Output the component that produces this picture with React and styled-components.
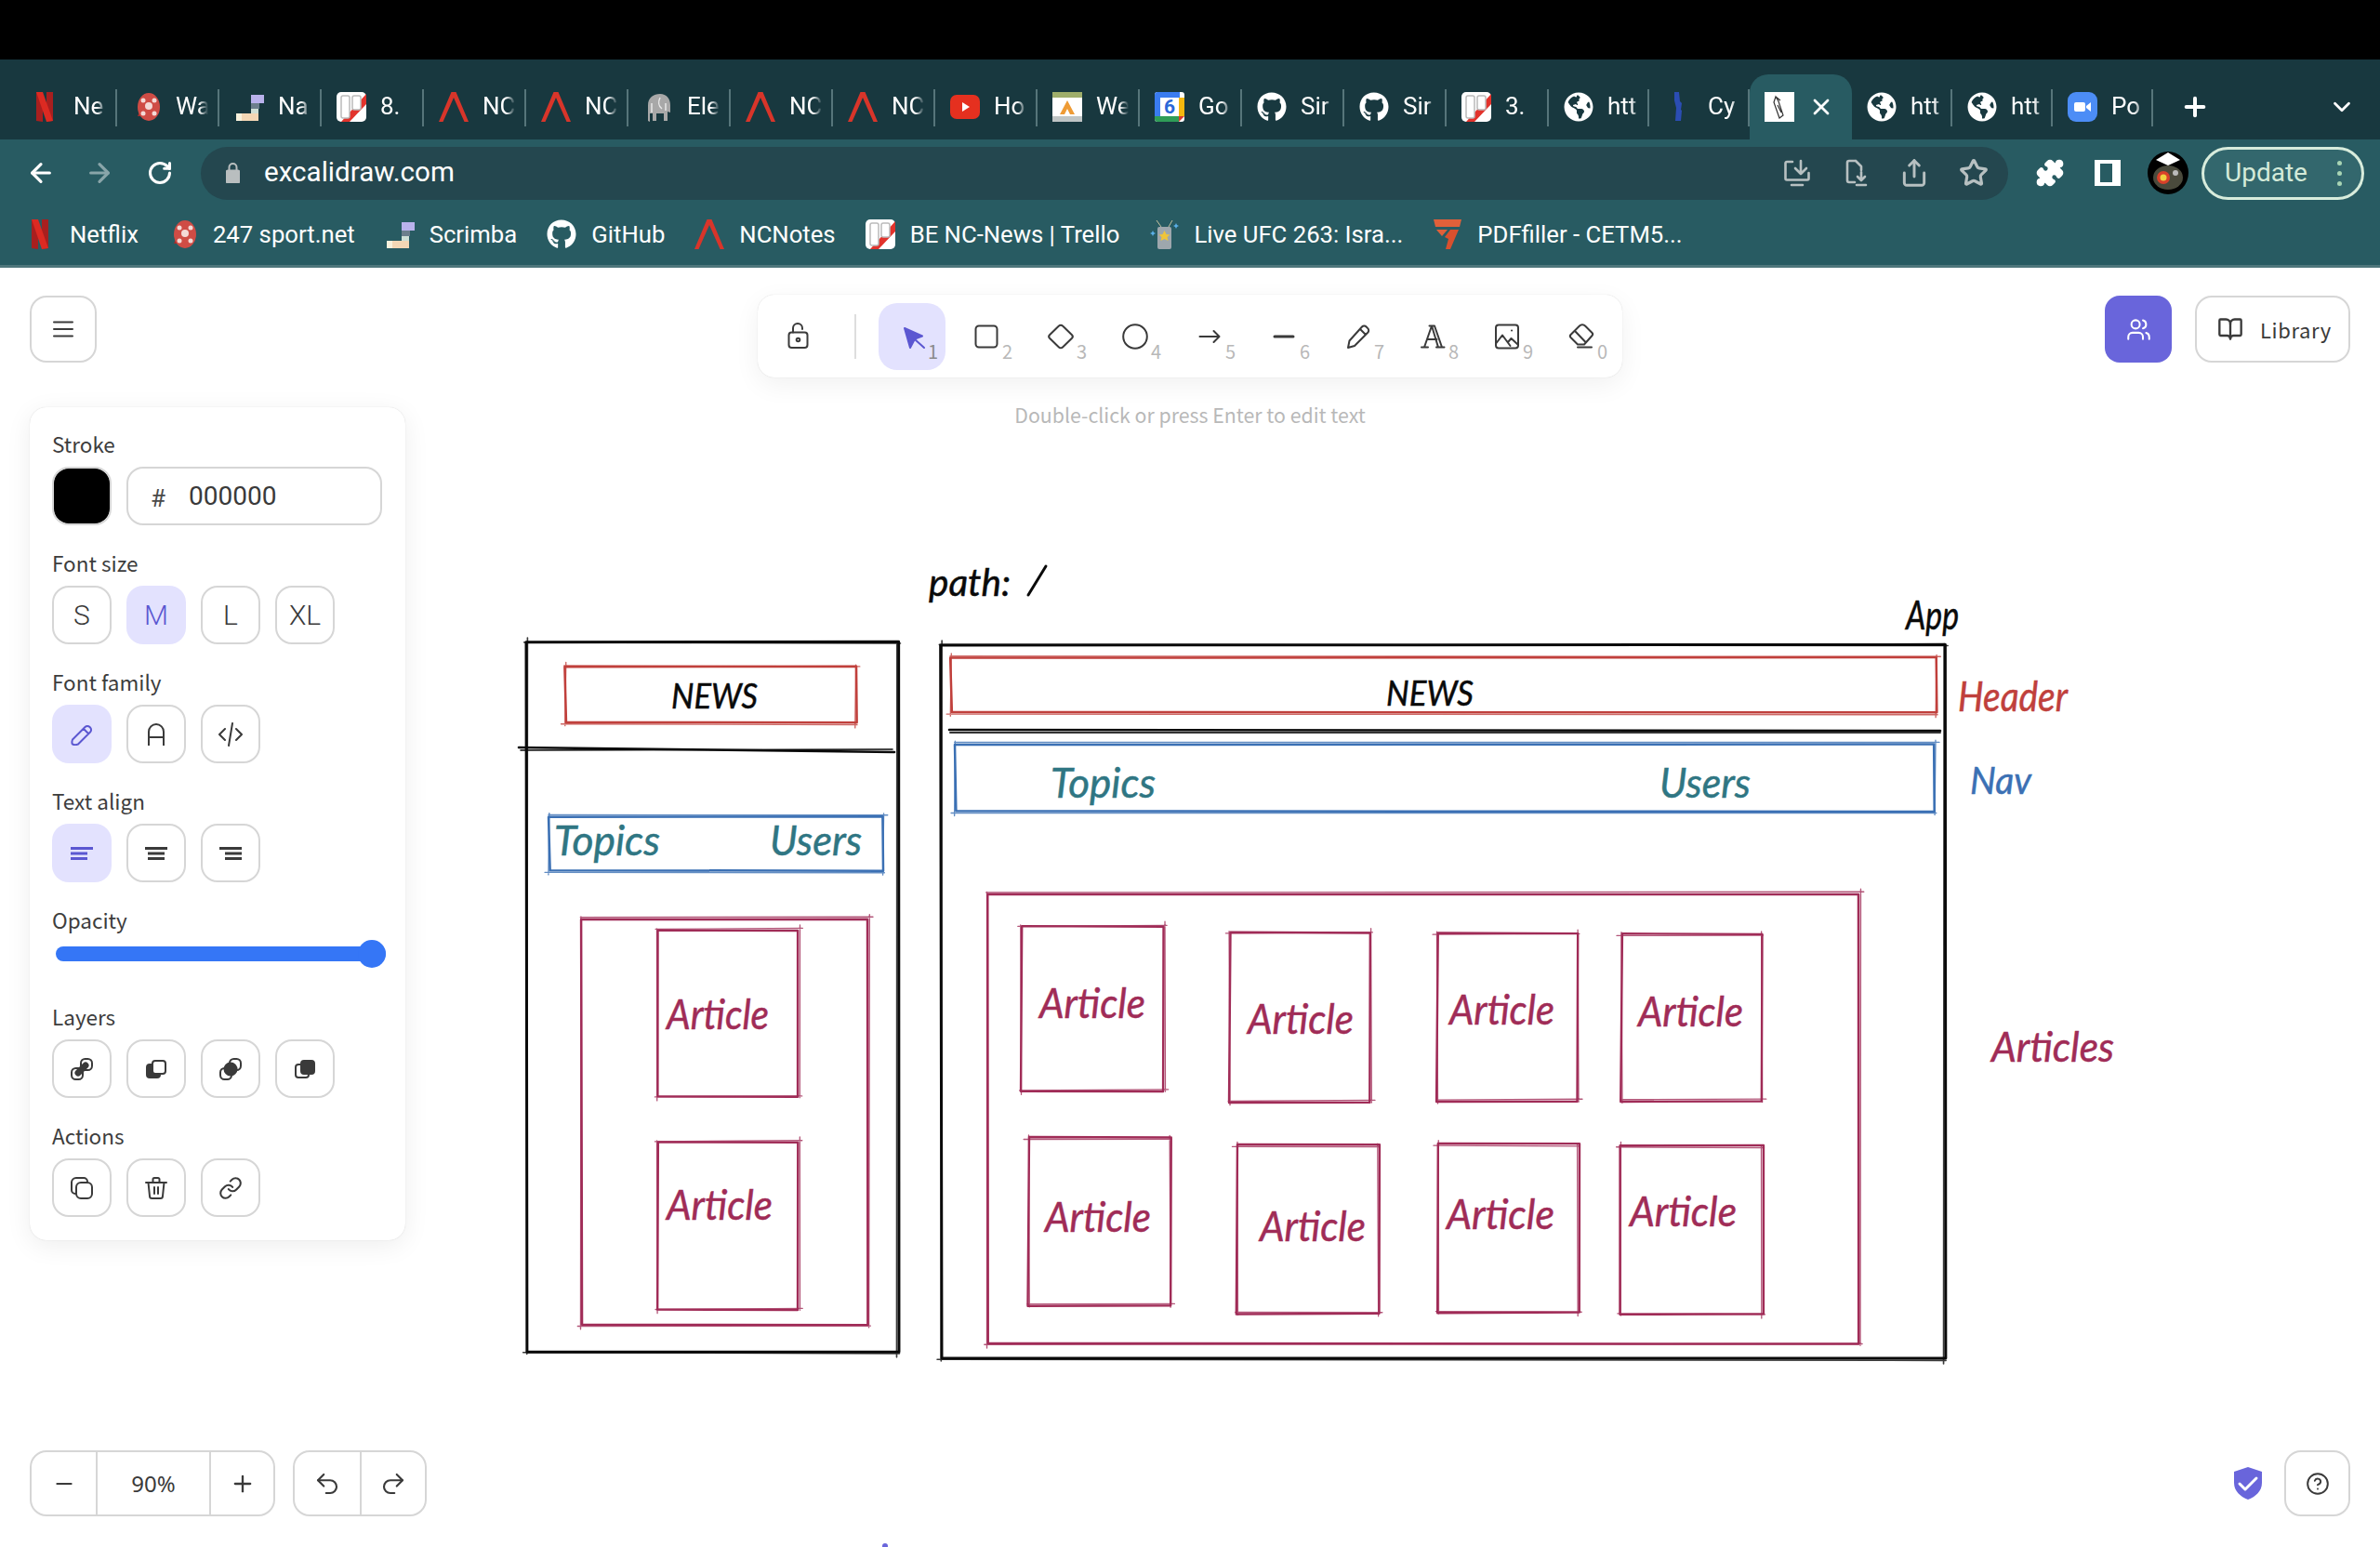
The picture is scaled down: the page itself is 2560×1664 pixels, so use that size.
import React from 'react';
import styled, { createGlobalStyle } from 'styled-components';
import { FaGithub, FaGlobeAmericas } from 'react-icons/fa';
import { Link, Undo2, Redo2, Users, BookOpen, CircleHelp, ArrowLeft, ArrowRight, RotateCw, Plus, ChevronDown, Star, Share, Puzzle, X, Minus } from 'lucide-react';

const Global = createGlobalStyle`
  html, body { margin: 0; padding: 0; background: #fff; }
  * { box-sizing: border-box; }
`;

const CHROME_FONT = `Roboto, "Liberation Sans", sans-serif`;
const UI_FONT = `"Noto Sans CJK SC", "Noto Sans", sans-serif`;
const HAND_FONT = `Lato, "Liberation Sans", sans-serif`;

const Page = styled.div`
  width: 2560px; height: 1664px; overflow: hidden; display: flex; flex-direction: column; background: #fff;
`;
const Bezel = styled.div`height: 64px; background: #000; flex: none;`;

const TabStrip = styled.div`
  flex: none; height: 86px; background: #18383f; padding: 16px 0 0 16px; display: flex; position: relative;
`;
const Tab = styled.div`
  width: ${p => p.$w}px; height: 70px; flex: none; display: flex; align-items: center; padding-left: 16px;
  position: relative; color: #fff; font: 400 26px ${CHROME_FONT};
  ${p => p.$active ? `
    background: #285b62; border-radius: 20px 20px 0 0;
  ` : `
    &::after { content: ''; position: absolute; right: 0; top: 16px; height: 40px; width: 2px; background: #56757a; }
  `}
`;
const TabLabel = styled.span`
  margin-left: 15px; width: 35px; height: 32px; line-height: 30px; overflow: hidden; white-space: nowrap;
  -webkit-mask-image: linear-gradient(90deg, #000 72%, transparent 100%);
  mask-image: linear-gradient(90deg, #000 72%, transparent 100%);
`;
const TabClose = styled.span`margin-left: 15px; display: flex; color: #fff;`;
const NewTab = styled.span`display: flex; align-items: center; margin-left: 29px; height: 70px; color: #fff;`;
const TabMenu = styled.span`display: flex; align-items: center; margin-left: 127px; height: 70px; color: #fff;`;

const Toolbar = styled.div`
  flex: none; height: 72px; background: #285b62; display: flex; align-items: center; padding: 0 17px 0 28px;
`;
const NavBtn = styled.span`
  width: 32px; display: flex; justify-content: center; margin-right: ${p => p.$mr}px; color: #fff; opacity: ${p => p.$dim ? .45 : 1};
`;
const Omnibox = styled.div`
  width: 1944px; height: 57px; background: #24474f; border-radius: 29px; display: flex; align-items: center; padding: 0 0 0 27px; flex: none;
`;
const Url = styled.span`margin: 0 0 2px 26px; color: #fff; font: 400 29.600px ${CHROME_FONT}; flex: 1;`;
const OmniIcons = styled.div`display: flex; gap: 32px; align-items: center; padding-right: 21px; color: #b7c0c1;`;
const ExtIcons = styled.div`display: flex; align-items: center; gap: 28px; margin-left: 29px; color: #fff;`;
const Update = styled.div`
  margin-left: 14px; width: 175px; height: 57px; border: 3px solid #d8ecdc; border-radius: 29px; background: #33676d;
  display: flex; align-items: center; justify-content: space-between; padding: 0 21px 2px 22px;
  color: #d4ead9; font: 400 28px ${CHROME_FONT};
`;
const Dots = styled.span`display: flex; flex-direction: column; gap: 6px; padding-top: 2px;`;
const Dot = styled.i`display: block; width: 5px; height: 5px; border-radius: 50%; background: #a8d4b4;`;

const Bookmarks = styled.div`
  flex: none; height: 66px; background: #285b62; border-bottom: 3px solid #4f777c; display: flex; align-items: center;
  padding: 0 0 3px 27px; gap: 32px; color: #fff; font: 400 25.700px ${CHROME_FONT};
`;
const Bookmark = styled.div`display: flex; align-items: center; gap: 16px; white-space: nowrap;`;

const FavSvg = styled.svg`display: block; flex: none; width: 32px; height: 32px;`;

function Favicon({ kind }) {
  switch (kind) {
    case 'netflix': return <FavSvg viewBox="0 0 32 32"><path d="M7 0h7v32l-7-1z" fill="#a81f1f"/><path d="M18 0h7v31l-7 1z" fill="#a81f1f"/><path d="M7 0h7l11 31-7 1z" fill="#dc2a22"/></FavSvg>;
    case 'ball': return <FavSvg viewBox="0 0 32 32"><path d="M6 26l5-12 8 12z" fill="#a22c2c"/><ellipse cx="18" cy="16" rx="12" ry="15" fill="#cf4c45"/><circle cx="18" cy="15" r="4" fill="#f4d9d6"/><circle cx="12" cy="9" r="2.500" fill="#f4d9d6"/><circle cx="24" cy="9" r="2.500" fill="#f4d9d6"/><circle cx="12" cy="23" r="2.500" fill="#f4d9d6"/><circle cx="24" cy="23" r="2.500" fill="#f4d9d6"/></FavSvg>;
    case 'scrimba': return <FavSvg viewBox="0 0 32 32"><rect x="18" y="3" width="14" height="9" fill="#b9b2ec"/><rect x="18" y="12" width="9" height="6" fill="#6c7f8c"/><rect x="18" y="18" width="8" height="5" fill="#cfe0d6"/><rect x="2" y="23" width="24" height="8" fill="#f3d7b5"/><rect x="2" y="23" width="6" height="8" fill="#f8f1dc"/></FavSvg>;
    case 'trello': return <FavSvg viewBox="0 0 32 32"><rect width="32" height="32" rx="5" fill="#fff"/><path d="M32 2v11L14 32H5z" fill="#e2332c"/><rect x="5" y="4" width="9" height="24" rx="2" fill="#fff" stroke="#bbb" strokeWidth="1.500"/><rect x="17" y="4" width="9" height="15" rx="2" fill="#fff" stroke="#bbb" strokeWidth="1.500"/></FavSvg>;
    case 'nc': return <FavSvg viewBox="0 0 32 32"><path d="M0 32 13.500 0h5L32 32h-4.500L16 6 4.500 32z" fill="#d8352a"/></FavSvg>;
    case 'elephant': return <FavSvg viewBox="0 0 32 32"><path d="M5 31V14C5 6 11 2 18 2c7 0 11 5 11 12v8l-3-1v10h-4v-8h-8v8h-4v-8H7v9z" fill="#a8a8a8"/><path d="M18 6c-2 4-2 9 2 12M9 12v10M24 12v8" stroke="#e8e8e8" strokeWidth="1.500" fill="none"/></FavSvg>;
    case 'youtube': return <FavSvg viewBox="0 0 32 32"><rect x="0" y="3" width="32" height="26" rx="7" fill="#e5301f"/><path d="M13 11l8 5-8 5z" fill="#fff"/></FavSvg>;
    case 'web': return <FavSvg viewBox="0 0 32 32"><rect width="32" height="32" rx="2" fill="#fff"/><rect width="32" height="6" fill="#9fae6b"/><rect y="26" width="32" height="6" fill="#bfc5c5"/><path d="M8 24 16 9l8 15-5 0-3-6-3 6z" fill="#ee9b35"/></FavSvg>;
    case 'gcal': return <FavSvg viewBox="0 0 32 32"><rect width="32" height="32" rx="3" fill="#fff"/><path d="M5 0h22v6H5z" fill="#3a7cf0"/><path d="M0 3a3 3 0 0 1 3-3h3v26H0z" fill="#3a7cf0"/><path d="M26 6h6v20h-6z" fill="#f5b80e"/><path d="M0 26h26v6H3a3 3 0 0 1-3-3z" fill="#2f9d57"/><path d="M26 26h6l-6 6z" fill="#d93a2c"/><text x="16" y="23" textAnchor="middle" fontSize="21" fontWeight="700" fontFamily="Roboto, sans-serif" fill="#2a67d8">6</text></FavSvg>;
    case 'github': return <FaGithub size={32} color="#fff" style={{ flex: 'none' }}/>;
    case 'globe': return <FaGlobeAmericas size={32} color="#fff" style={{ flex: 'none' }}/>;
    case 'cy': return <FavSvg viewBox="0 0 32 32"><path d="M11 0h5l1 10 2 2-1 7 1 1-1 11h-6l1-14-2-8z" fill="#2b4db3"/></FavSvg>;
    case 'excali': return <FavSvg viewBox="0 0 32 32"><rect width="32" height="32" fill="#fff"/><path d="M12 5l-2 6 6 17 4-3-5-15zM12 5l5 4M14 14l4 8" stroke="#333" strokeWidth="1.200" fill="none"/></FavSvg>;
    case 'zoom': return <FavSvg viewBox="0 0 32 32"><rect width="32" height="32" rx="9" fill="#4c8df6"/><rect x="7" y="11" width="12" height="10" rx="2" fill="#fff"/><path d="M20 15l5-4v10l-5-4z" fill="#fff"/></FavSvg>;
    case 'vip': return <FavSvg viewBox="0 0 32 32"><path d="M8 1l5 7M25 1l-4 7" stroke="#c7c3a0" strokeWidth="1"/><rect x="9" y="8" width="15" height="24" rx="2" fill="#9ea7ad"/><path d="M16.500 12l2 4 4 .5-3 2.500 1 4-4-2-4 2 1-4-3-2.500 4-.5z" fill="#f0c53a"/><path d="M29 4l1 2 2 1-2 1-1 2-1-2-2-1 2-1zM4 12l1 2 2 1-2 1-1 2-1-2-2-1 2-1z" fill="#5ab0e8"/></FavSvg>;
    case 'pdf': return <FavSvg viewBox="0 0 32 32"><path d="M1 0h30l-2 8H3z" fill="#e0603a"/><path d="M4 11h12l-6 7z" fill="#e0603a"/><path d="M19 11h9l-9 21h-5l3-11-4-2z" fill="#d9502e"/></FavSvg>;
    default: return null;
  }
}

const tabs = [
  ['netflix', 'Ne'], ['ball', 'Wa'], ['scrimba', 'Na'], ['trello', '8.'], ['nc', 'NC'], ['nc', 'NC'], ['elephant', 'Ele'], ['nc', 'NC'], ['nc', 'NC'],
  ['youtube', 'Ho'], ['web', 'We'], ['gcal', 'Go'], ['github', 'Sir'], ['github', 'Sir'], ['trello', '3.'],
  ['globe', 'htt', 108], ['cy', 'Cy', 108], ['excali', null, 110], ['globe', 'htt', 108], ['globe', 'htt', 108], ['zoom', 'Po', 108],
];
const bookmarks = [
  ['netflix', 'Netflix'], ['ball', '247 sport.net'], ['scrimba', 'Scrimba'], ['github', 'GitHub'], ['nc', 'NCNotes'],
  ['trello', 'BE NC-News | Trello'], ['vip', 'Live UFC 263: Isra...'], ['pdf', 'PDFfiller - CETM5...'],
];

const LineIcon = styled.svg`
  display: block; flex: none; fill: none; stroke: currentColor; stroke-width: ${p => p.$sw || 2}; stroke-linecap: round; stroke-linejoin: round;
`;

const Chrome = () => (
  <>
    <Bezel />
    <TabStrip>
      {tabs.map(([k, t, w], i) => (
        <Tab key={i} $w={w || 110} $active={t === null}>
          <Favicon kind={k} />
          {t === null
            ? <TabClose><X size={28} strokeWidth={2.400} /></TabClose>
            : <TabLabel>{t}</TabLabel>}
        </Tab>
      ))}
      <NewTab><Plus size={32} strokeWidth={3} /></NewTab>
      <TabMenu><ChevronDown size={30} strokeWidth={2.200} /></TabMenu>
    </TabStrip>
    <Toolbar>
      <NavBtn $mr={31}><ArrowLeft size={32} strokeWidth={2.400} /></NavBtn>
      <NavBtn $mr={33} $dim><ArrowRight size={32} strokeWidth={2.400} /></NavBtn>
      <NavBtn $mr={28}><RotateCw size={28} strokeWidth={2.600} /></NavBtn>
      <Omnibox>
        <LineIcon width="15" height="22" viewBox="0 0 15 22" style={{ color: '#b9bebf' }}>
          <path d="M3.500 9V5a4 4 0 0 1 8 0v4" />
          <rect x="0.500" y="8.500" width="14" height="13" rx="2" fill="#b9bebf" />
        </LineIcon>
        <Url>excalidraw.com</Url>
        <OmniIcons>
          <LineIcon width="32" height="32" viewBox="0 0 32 32" $sw={2.600}>
            <path d="M11 4H5a1.500 1.500 0 0 0-1.500 1.500V22a1.500 1.500 0 0 0 1.500 1.500h22a1.500 1.500 0 0 0 1.500-1.500v-6M20 3v14M14 11l6 6 6-6M10 29h12" />
          </LineIcon>
          <LineIcon width="30" height="32" viewBox="0 0 30 32" $sw={2.600}>
            <path d="M15 3H8a2 2 0 0 0-2 2v19a2 2 0 0 0 2 2h6M15 3l6 6v4M21 15v8M17 20l4 4 4-4M16 29h10" />
          </LineIcon>
          <Share size={32} strokeWidth={2.200} />
          <Star size={32} strokeWidth={2.400} />
        </OmniIcons>
      </Omnibox>
      <ExtIcons>
        <Puzzle size={32} fill="#fff" strokeWidth={1.500} />
        <svg width="28" height="28" viewBox="0 0 28 28" style={{ display: 'block', marginLeft: 4 }}>
          <rect width="28" height="28" fill="#fff" />
          <rect x="6" y="4" width="13" height="20" fill="#285b62" />
        </svg>
        <svg width="44" height="46" viewBox="0 0 44 46" style={{ display: 'block', marginLeft: 1 }}>
          <ellipse cx="22" cy="23" rx="22" ry="23" fill="#000" />
          <path d="M9 9 22 1l13 8-13 6z" fill="#fff" />
          <ellipse cx="22" cy="28" rx="16" ry="13" fill="#4a4a3c" />
          <circle cx="17" cy="28" r="7" fill="#d8402a" />
          <circle cx="17" cy="28" r="3.500" fill="#f0d040" />
          <circle cx="30" cy="23" r="3" fill="#bbb" />
        </svg>
      </ExtIcons>
      <Update>
        Update
        <Dots><Dot /><Dot /><Dot /></Dots>
      </Update>
    </Toolbar>
    <Bookmarks>
      {bookmarks.map(([k, t]) => (
        <Bookmark key={t}><Favicon kind={k} />{t}</Bookmark>
      ))}
    </Bookmarks>
  </>
);

/* ---------- hand-drawn canvas ---------- */
const Stage = styled.main`position: relative; flex: 1; min-height: 0;`;
const SketchSvg = styled.svg`position: absolute; inset: 0; width: 100%; height: 100%;`;
const Stroke = styled.path`fill: none; stroke: ${p => p.$c}; stroke-width: ${p => p.$w}; stroke-linecap: round; stroke-linejoin: round; opacity: ${p => p.$o || 1};`;
const Hand = styled.text`
  font-family: ${HAND_FONT}; font-style: italic; font-weight: 400; font-size: ${p => p.$s}px; fill: ${p => p.$c};
  stroke: ${p => p.$c}; stroke-width: .5px;
`;

const BLACK = '#0a0a0a', RED = '#c0403c', BLUE = '#3b70b4', TEAL = '#2f7683', WINE = '#a02c57';

const jitter = (seed, k, a) => Math.sin(seed * 12.900 + k * 78.200) * a;
function RoughRect({ r, c, w = 2, seed = 1 }) {
  const [x1, y1, x2, y2] = r;
  const j = (k, a) => jitter(seed, k, a);
  const main = `M${x1 + j(1, 1)} ${y1 + j(2, 1)} L${x2 + j(3, 1)} ${y1 + j(4, 1)} L${x2 + j(5, 1)} ${y2 + j(6, 1)} L${x1 + j(7, 1)} ${y2 + j(8, 1)} Z`;
  const o = 3;
  const over = [
    `M${x1 - o + j(9, 2)} ${y1 + j(10, 1.500)} L${x2 + o + j(11, 2)} ${y1 + j(12, 1.800)}`,
    `M${x2 + j(13, 1.500)} ${y1 - o + j(14, 2)} L${x2 + j(15, 1.500)} ${y2 + o + j(16, 2)}`,
    `M${x2 + o + j(17, 2)} ${y2 + j(18, 1.800)} L${x1 - o + j(19, 2)} ${y2 + j(20, 1.500)}`,
    `M${x1 + j(21, 1.500)} ${y2 + o + j(22, 2)} L${x1 + j(23, 1.500)} ${y1 - o + j(24, 2)}`,
  ].join(' ');
  return <>
    <Stroke d={main} $c={c} $w={w} />
    <Stroke d={over} $c={c} $w={w * .55} $o={.8} />
  </>;
}
const Label = ({ x, end, y, s = 44, c, children }) => (
  <Hand x={x} y={y + 2} $s={s} $c={c} textLength={end - x} lengthAdjust="spacingAndGlyphs">{children}</Hand>
);

const cards = [
  [708, 1000, 859, 1179], [708, 1228, 859, 1408],
  [1099, 996, 1252, 1173], [1323, 1003, 1474, 1185], [1546, 1004, 1697, 1184], [1744, 1005, 1895, 1184],
  [1106, 1224, 1259, 1404], [1330, 1232, 1483, 1413], [1546, 1231, 1698, 1412], [1742, 1233, 1896, 1414],
];
const articleLabels = [
  [717, 827, 1105], [717, 831, 1310],
  [1118, 1232, 1093], [1342, 1456, 1110], [1559, 1672, 1100], [1762, 1875, 1102],
  [1124, 1238, 1323], [1355, 1469, 1333], [1556, 1672, 1320], [1753, 1868, 1317],
];

const Sketch = () => (
  <SketchSvg viewBox="0 288 2560 1376" aria-label="wireframe sketch">
    <RoughRect r={[566, 691, 966, 1455]} c={BLACK} w={3} seed={1} />
    <RoughRect r={[1012, 694, 2092, 1462]} c={BLACK} w={3} seed={2} />
    <RoughRect r={[608, 717, 921, 778]} c={RED} w={2.500} seed={3} />
    <RoughRect r={[1023, 707, 2083, 767]} c={RED} w={2.500} seed={4} />
    <Stroke d="M558 804 L962 809" $c={BLACK} $w={2.600} />
    <Stroke d="M560 807 L960 806" $c={BLACK} $w={1.600} />
    <Stroke d="M1021 785 L2087 786" $c={BLACK} $w={2.600} />
    <Stroke d="M1022 788 L2087 788" $c={'#333'} $w={2} />
    <RoughRect r={[591, 878, 950, 937]} c={BLUE} w={2.500} seed={5} />
    <RoughRect r={[1028, 800, 2081, 873]} c={BLUE} w={2.500} seed={6} />
    <RoughRect r={[626, 988, 934, 1425]} c={WINE} w={2.500} seed={7} />
    <RoughRect r={[1063, 961, 2000, 1445]} c={WINE} w={2.500} seed={8} />
    {cards.map((r, i) => <RoughRect key={i} r={r} c={WINE} w={2.400} seed={9 + i} />)}

    <Label x={999} end={1087} y={639} s={40} c={BLACK}>path:</Label>
    <Stroke d="M1106 640 L1125 609" $c={BLACK} $w={3} />
    <Label x={2050} end={2107} y={675} s={42} c={BLACK}>App</Label>
    <Label x={722} end={815} y={760} s={36} c={BLACK}>NEWS</Label>
    <Label x={1491} end={1585} y={757} s={36} c={BLACK}>NEWS</Label>
    <Label x={2106} end={2224} y={763} c={RED}>Header</Label>
    <Label x={2119} end={2185} y={852} s={40} c={BLUE}>Nav</Label>
    <Label x={596} end={710} y={918} c={TEAL}>Topics</Label>
    <Label x={828} end={927} y={918} c={TEAL}>Users</Label>
    <Label x={1130} end={1243} y={856} c={TEAL}>Topics</Label>
    <Label x={1785} end={1883} y={856} c={TEAL}>Users</Label>
    {articleLabels.map(([a, b, y], i) => <Label key={i} x={a} end={b} y={y} c={WINE}>Article</Label>)}
    <Label x={2142} end={2274} y={1140} c={WINE}>Articles</Label>
    <circle cx="952" cy="1663" r="3" fill="#6965db" />
  </SketchSvg>
);

/* ---------- excalidraw overlay ---------- */
const Overlay = styled.div`
  position: absolute; inset: 0; display: flex; flex-direction: column; justify-content: space-between;
  padding: 30px 32px 33px; font-family: ${UI_FONT}; color: #3a3a3a;
  pointer-events: none;
`;
const TopGrid = styled.div`display: grid; grid-template-columns: 1fr auto 1fr; align-items: start;`;
const LeftCol = styled.div`display: flex; flex-direction: column; gap: 48px; align-items: flex-start;`;
const CenterCol = styled.div`display: flex; flex-direction: column; align-items: center; margin-top: -1px;`;
const RightCol = styled.div`display: flex; justify-content: flex-end; gap: 25px;`;

const IconBox = styled.div`
  width: ${p => p.$w || 72}px; height: ${p => p.$h || 72}px; border: 2px solid #d6d6d6; border-radius: 18px; background: #fff;
  display: flex; align-items: center; justify-content: center; color: #3a3a3a;
`;
const CollabBtn = styled.div`
  width: 72px; height: 72px; border-radius: 16px; background: #6965db; color: #fff; display: flex; align-items: center; justify-content: center;
`;
const LibraryBtn = styled.div`
  width: 167px; height: 72px; border: 2px solid #d6d6d6; border-radius: 18px; background: #fff;
  display: flex; align-items: center; gap: 18px; padding-left: 22px; color: #3a3a3a; font-size: 22px; letter-spacing: .6px;
`;

const Panel = styled.section`
  width: 404px; height: 896px; background: #fff; border-radius: 18px; padding: 26px 24px 25px;
  display: flex; flex-direction: column; gap: 27px;
  box-shadow: 0 0 1px rgba(0,0,0,.2), 0 6px 28px rgba(0,0,0,.07);
`;
const Section = styled.div`display: flex; flex-direction: column; gap: 8px;`;
const SectionLabel = styled.div`font-size: 22.500px; height: 30px; line-height: 26px; color: #3d3d3d;`;
const Row = styled.div`display: flex; gap: 16px;`;
const OptBtn = styled.div`
  width: 64px; height: 63px; border-radius: 18px; display: flex; align-items: center; justify-content: center;
  font: 300 30px Roboto, sans-serif;
  ${p => p.$on
    ? `background: #e3e2fe; color: #5b57d1;`
    : `background: #fff; color: #3a3a3a; border: 2px solid #d6d6d6;`}
`;
const Swatch = styled.div`width: 64px; height: 63px; border-radius: 18px; border: 2px solid #d6d6d6; background: #000; background-clip: padding-box; box-shadow: inset 0 0 0 1px #000;`;
const HexInput = styled.div`
  width: 275px; height: 63px; border: 2px solid #d6d6d6; border-radius: 18px; display: flex; align-items: center;
  padding-left: 24px; font: 400 28px Roboto, sans-serif; color: #3a3a3a;
`;
const Hash = styled.span`margin-right: 25px; font-size: 26px; padding-top: 4px; color: #4a4a4a;`;
const Slider = styled.div`position: relative; height: 24px; margin: 0 0 15px 4px; width: 355px; display: flex; align-items: center;`;
const SliderTrack = styled.div`width: 100%; height: 16px; border-radius: 8px; background: #3576f6;`;
const SliderThumb = styled.div`position: absolute; right: 0; top: -3px; width: 30px; height: 30px; border-radius: 50%; background: #3576f6;`;

const ToolBar = styled.nav`
  display: flex; align-items: center; height: 89px; padding: 1px 8px 0 7px; background: #fff; border-radius: 18px; gap: 8px;
  box-shadow: 0 0 1px rgba(0,0,0,.2), 0 8px 28px rgba(0,0,0,.06);
`;
const Divider = styled.span`width: 2px; height: 48px; background: #dedede; margin: 0 16px 0 17px;`;
const Tool = styled.div`
  position: relative; width: 72px; height: 72px; border-radius: 20px; display: flex; align-items: center; justify-content: center;
  background: ${p => p.$on ? '#e3e2fe' : 'transparent'}; color: #3a3a3a;
`;
const KeyHint = styled.span`
  position: absolute; right: 8px; bottom: 10px; font-size: 20px; line-height: 1; color: ${p => p.$on ? '#8a8a8a' : '#b8b8b8'};
`;
const Hint = styled.div`margin-top: 25px; font-size: 21.300px; line-height: 30px; color: #b8b8b8;`;

const BottomRow = styled.div`display: flex; align-items: center;`;
const Group = styled.div`display: flex; height: 71px; border: 2px solid #d6d6d6; border-radius: 18px; background: #fff; margin-right: 19px;`;
const GroupCell = styled.div`
  width: ${p => p.$w}px; display: flex; align-items: center; justify-content: center; color: #3a3a3a;
  font: 400 24px "Noto Sans", sans-serif;
  & + & { border-left: 2px solid #d6d6d6; }
`;
const Spacer = styled.div`flex: 1;`;
const ShieldWrap = styled.div`margin-right: 24px; display: flex;`;

const Ico = ({ children, s = 24, vb = 24, sw }) => <LineIcon width={s} height={s} viewBox={`0 0 ${vb} ${vb}`} $sw={sw}>{children}</LineIcon>;
const DARK = '#3a3a3a';

const toolIcons = [
  <Ico s={32} vb={32} key="s"><path d="M8 7 27 15.500 19 18.500 14 28Z" fill="#5b57d1" stroke="#5b57d1" /><path d="M19 19 29 28" stroke="#5b57d1" /></Ico>,
  <Ico s={32} vb={32} key="r"><rect x="4.500" y="4.500" width="23" height="23" rx="3.500" /></Ico>,
  <Ico s={32} vb={32} key="d"><path d="M14 4.500 4 14.200a2.600 2.600 0 0 0 0 3.600L14 27.500a2.800 2.800 0 0 0 4 0L28 17.800a2.600 2.600 0 0 0 0-3.600L18 4.500a2.800 2.800 0 0 0-4 0Z" /></Ico>,
  <Ico s={32} vb={32} key="c"><circle cx="16" cy="16" r="12.800" /></Ico>,
  <Ico s={32} vb={32} key="a"><path d="M5.500 16H26.500M20.500 10l6 6-6 6" /></Ico>,
  <Ico s={32} vb={32} key="l" sw={3}><path d="M6 16H26" /></Ico>,
  <Ico s={32} vb={32} key="p"><path d="M5 28l1.500-7.500L20 5.500a3.200 3.200 0 0 1 4.600 0l1.600 1.600a3.200 3.200 0 0 1 0 4.600L12 26z M18 8l6 6" /></Ico>,
  <Ico s={32} vb={32} key="t"><path d="M4 27.500H11M20 27.500H28.500M7 27.500 15 4.500H18L26 27.500M15 4.500 22 27.500M10 19H20.500M12.500 4.500H15" /></Ico>,
  <Ico s={32} vb={32} key="i"><rect x="4" y="3.500" width="24" height="25" rx="3" /><path d="M4.500 23 11 14.500 19.500 26M17 22l3.500-4 7 6.500M21 9.500h.1" /></Ico>,
  <Ico s={32} vb={32} key="e"><path d="M14 4.500 4.500 14a2.200 2.200 0 0 0 0 3L12 24.500h7L27.500 15a2.200 2.200 0 0 0 0-3L20 4.500a4 4 0 0 0-6 0ZM9 10l11 11.500M12 27.500H27" /></Ico>,
];
const toolKeys = ['1', '2', '3', '4', '5', '6', '7', '8', '9', '0'];

const ExcalidrawUI = () => (
  <Overlay>
    <TopGrid>
      <LeftCol>
        <IconBox>
          <Ico s={24} sw={2}><path d="M2 4.500H22M2 12H22M2 19.500H22" /></Ico>
        </IconBox>
        <Panel>
          <Section>
            <SectionLabel>Stroke</SectionLabel>
            <Row>
              <Swatch />
              <HexInput><Hash>#</Hash>000000</HexInput>
            </Row>
          </Section>
          <Section>
            <SectionLabel>Font size</SectionLabel>
            <Row>
              <OptBtn>S</OptBtn>
              <OptBtn $on>M</OptBtn>
              <OptBtn>L</OptBtn>
              <OptBtn>XL</OptBtn>
            </Row>
          </Section>
          <Section>
            <SectionLabel>Font family</SectionLabel>
            <Row>
              <OptBtn $on><Ico><path d="M2 22.500c-.8-.3-.8-3 0-5L15.500 4a3.500 3.500 0 0 1 5 0l.5.500a3.500 3.500 0 0 1 0 5L8 22.500c-2 .8-5 .5-6 0ZM14 6l5 5" /></Ico></OptBtn>
              <OptBtn><Ico><path d="M4 23.500V9a8 8 0 0 1 16 0v14.500M4 15H20" /></Ico></OptBtn>
              <OptBtn><Ico s={28} vb={28}><path d="M8 8l-6 6 6 6M20 8l6 6-6 6M16 2 12 26" /></Ico></OptBtn>
            </Row>
          </Section>
          <Section>
            <SectionLabel>Text align</SectionLabel>
            <Row>
              <OptBtn $on><Ico sw={3}><path d="M0 6.500H24M0 12H18M0 17.500H18" strokeLinecap="butt" /></Ico></OptBtn>
              <OptBtn><Ico sw={3}><path d="M0 6.500H24M3 12H21M3 17.500H21" strokeLinecap="butt" /></Ico></OptBtn>
              <OptBtn><Ico sw={3}><path d="M0 6.500H24M6 12H24M6 17.500H24" strokeLinecap="butt" /></Ico></OptBtn>
            </Row>
          </Section>
          <Section>
            <SectionLabel>Opacity</SectionLabel>
            <Slider><SliderTrack /><SliderThumb /></Slider>
          </Section>
          <Section>
            <SectionLabel>Layers</SectionLabel>
            <Row>
              <OptBtn><Ico><rect x="1" y="11" width="12" height="12" rx="4.500" /><rect x="11" y="1" width="12" height="12" rx="4.500" /><path d="M8 16l8-8" strokeWidth="7" stroke={DARK} /></Ico></OptBtn>
              <OptBtn><Ico><rect x="2" y="7" width="14" height="14" rx="3" fill={DARK} /><rect x="8" y="3" width="14" height="14" rx="3" fill="#fff" /></Ico></OptBtn>
              <OptBtn><Ico><rect x="1" y="11" width="12" height="12" rx="4.500" /><rect x="11" y="1" width="12" height="12" rx="4.500" /><circle cx="12" cy="12" r="6.500" fill={DARK} /></Ico></OptBtn>
              <OptBtn><Ico><rect x="2" y="7" width="14" height="14" rx="3" /><rect x="8" y="3" width="14" height="14" rx="3" fill={DARK} /></Ico></OptBtn>
            </Row>
          </Section>
          <Section>
            <SectionLabel>Actions</SectionLabel>
            <Row>
              <OptBtn><Ico><rect x="6" y="6" width="17" height="17" rx="5" /><path d="M5 18a4 4 0 0 1-4-4V6a5 5 0 0 1 5-5h8a4 4 0 0 1 4 4" /></Ico></OptBtn>
              <OptBtn><Ico><path d="M1 6H23M3.500 6 5 20.500a2.500 2.500 0 0 0 2.500 2.500h9a2.500 2.500 0 0 0 2.500-2.500L20.500 6M8.500 6V2.500a1.500 1.500 0 0 1 1.500-1.500h4a1.500 1.500 0 0 1 1.500 1.500V6M10 11v7M14 11v7" /></Ico></OptBtn>
              <OptBtn><Link size={26} strokeWidth={1.900} /></OptBtn>
            </Row>
          </Section>
        </Panel>
      </LeftCol>
      <CenterCol>
        <ToolBar>
          <Tool>
            <Ico s={32} vb={32}><rect x="6.500" y="11.500" width="20" height="16.500" rx="3" /><path d="M11 11.500V7a5 5 0 0 1 10 0v1" /><circle cx="16.500" cy="19.500" r="1.800" /></Ico>
          </Tool>
          <Divider />
          {toolIcons.map((ic, i) => (
            <Tool key={i} $on={i === 0}>
              {ic}
              <KeyHint $on={i === 0}>{toolKeys[i]}</KeyHint>
            </Tool>
          ))}
        </ToolBar>
        <Hint>Double-click or press Enter to edit text</Hint>
      </CenterCol>
      <RightCol>
        <CollabBtn><Users size={27} strokeWidth={1.800} /></CollabBtn>
        <LibraryBtn><BookOpen size={28} strokeWidth={2} />Library</LibraryBtn>
      </RightCol>
    </TopGrid>
    <BottomRow>
      <Group>
        <GroupCell $w={69}><Minus size={26} strokeWidth={2} /></GroupCell>
        <GroupCell $w={122}>90%</GroupCell>
        <GroupCell $w={69}><Plus size={28} strokeWidth={2} /></GroupCell>
      </Group>
      <Group>
        <GroupCell $w={70}><Undo2 size={30} strokeWidth={1.700} /></GroupCell>
        <GroupCell $w={70}><Redo2 size={30} strokeWidth={1.700} /></GroupCell>
      </Group>
      <Spacer />
      <ShieldWrap>
        <svg width="30" height="35" viewBox="0 0 30 35">
          <path d="M15 0 30 5v12c0 9-7 15-15 18C7 32 0 26 0 17V5Z" fill="#6965db" />
          <path d="M6 18l6 6L24 12" fill="none" stroke="#fff" strokeWidth="3" strokeLinecap="round" strokeLinejoin="round" />
        </svg>
      </ShieldWrap>
      <IconBox $w={71} $h={71}><CircleHelp size={26} strokeWidth={1.800} /></IconBox>
    </BottomRow>
  </Overlay>
);

export default function App() {
  return (
    <Page>
      <Global />
      <Chrome />
      <Stage>
        <Sketch />
        <ExcalidrawUI />
      </Stage>
    </Page>
  );
}
